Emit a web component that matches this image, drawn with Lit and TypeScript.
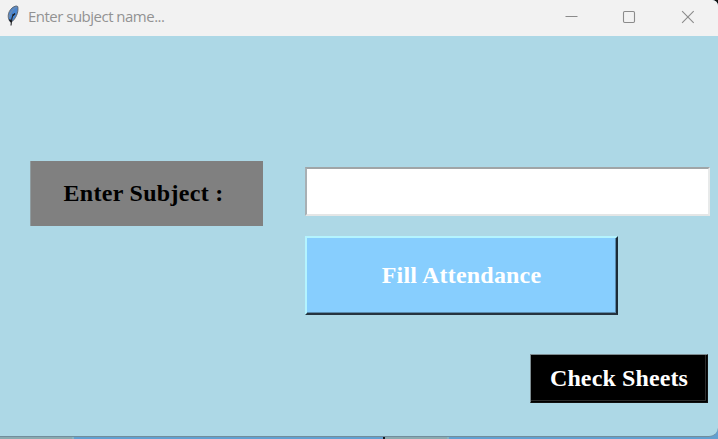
import { LitElement, html, css } from "lit";
import { customElement } from "lit/decorators.js";

@customElement("title-bar")
class TitleBar extends LitElement {
  static styles = css`
    :host {
      display: flex;
      align-items: center;
      height: 36px;
      background: #f2f2f2;
      color: #929292;
    }
    .feather { width: 16px; height: 22px; margin: 0 7px 4px 5px; }
    .title {
      flex: 1;
      font: 15px/20px "Open Sans", "Noto Sans", sans-serif;
      letter-spacing: -0.51px;
      padding-bottom: 4px;
      white-space: nowrap;
    }
    .control { width: 58.5px; height: 36px; }
  `;
  render() {
    return html`
      <svg class="feather" viewBox="0 0 16 22">
        <path d="M5.5 17 C2 13.5 2.5 7 7 3 C9.5 1 12 .5 12.8 1.6 C13.6 6 12 11.5 8 15.8 Z" fill="#4a86d0" stroke="#5f6266" stroke-width=".9"/>
        <path d="M11.8 2 C9 3 5.6 6.5 4 12.5" fill="none" stroke="#8d9298" stroke-width=".8"/>
        <path d="M8.2 9 C7 12 6.2 16 6 20.5" fill="none" stroke="#25282d" stroke-width="1.1"/>
        <path d="M8 10.5 L10 8.5 M4.5 14.5 L6.4 17" stroke="#15171a" stroke-width="1.3"/>
      </svg>
      <span class="title">Enter subject name...</span>
      <svg class="control" viewBox="0 0 58.5 36"><path d="M22.5 16.5H34.5" stroke="#8b8b8b"/></svg>
      <svg class="control" viewBox="0 0 58.5 36"><rect x="22.5" y="11.5" width="11" height="11" rx="1.2" fill="none" stroke="#8b8b8b" stroke-width="1.1"/></svg>
      <svg class="control" viewBox="0 0 58.5 36"><path d="M22.1 11.2L33.7 22.8M33.7 11.2L22.1 22.8" stroke="#8b8b8b" stroke-width="1.1"/></svg>
    `;
  }
}

@customElement("app-root")
class AppRoot extends LitElement {
  static styles = css`
    :host {
      display: block;
      width: 718px;
      height: 439px;
      overflow: hidden;
      background: linear-gradient(90deg,
        #8aaab0 0 72px, #86b6c4 72px 74px, #62a0d0 74px 383px,
        #101820 383px 385px, #8aaab0 385px 447px, #86b6c4 447px 449px, #62a0d0 449px);
    }
    .corner { height: 439px; background: linear-gradient(#101010, #101010) 100% 0 / 8px 8px no-repeat; }
    .window {
      box-sizing: border-box;
      height: 437px;
      border-bottom: 1px solid #728d9b;
      border-radius: 0 6px 9px 0;
      overflow: hidden;
      background: #add8e6;
    }
    .form {
      display: grid;
      grid-template-columns: 233px 406px;
      column-gap: 42px;
      padding: 125px 0 0 30px;
      font: bold 24px/28px "Liberation Serif", "Times New Roman", serif;
    }
    .label, .button {
      box-sizing: border-box;
      display: flex;
      align-items: center;
      justify-content: center;
      white-space: nowrap;
    }
    .label {
      height: 65px;
      background: #808080;
      color: #000;
      letter-spacing: 0.3px;
      padding: 0 7px 2px 0;
      border-left: 1px solid #8f9ca0;
    }
    .fields { padding-top: 6px; }
    .entry {
      box-sizing: border-box;
      display: block;
      width: 405px;
      height: 49px;
      margin: 0;
      padding: 0 6px;
      border: 2px solid;
      border-color: #a0a5a7 #e8eaea #e4e6e6 #a8b0b4;
      border-radius: 0;
      outline: none;
      background: #fff;
      font: inherit;
    }
    .button { margin: 0; padding: 0; border: 0; border-radius: 0; font: inherit; color: #fff; }
    .fill {
      width: 313px;
      height: 79px;
      margin-top: 20px;
      padding-bottom: 1px;
      background: #87cefe;
      border: 2px solid;
      border-color: #b4f4ff #1c2b36 #263440 #b4f4ff;
      box-shadow: inset -1px -1px #5b8bad;
      letter-spacing: 0.2px;
    }
    .check {
      width: 178px;
      height: 49px;
      margin: 39px 0 0 225px;
      padding-bottom: 1px;
      background: #000;
      border: 1px solid;
      border-color: #7d8b90 #101010 #101010 #7d8b90;
      box-shadow: inset -1px -1px #000, inset -2px -2px #2c2c2c;
      letter-spacing: 0.12px;
    }
  `;
  render() {
    return html`
      <div class="corner">
        <div class="window">
          <title-bar></title-bar>
          <div class="form">
            <div class="label">Enter Subject :</div>
            <div class="fields">
              <input class="entry" type="text" aria-label="Enter Subject">
              <button class="button fill">Fill Attendance</button>
              <button class="button check">Check Sheets</button>
            </div>
          </div>
        </div>
      </div>
    `;
  }
}
